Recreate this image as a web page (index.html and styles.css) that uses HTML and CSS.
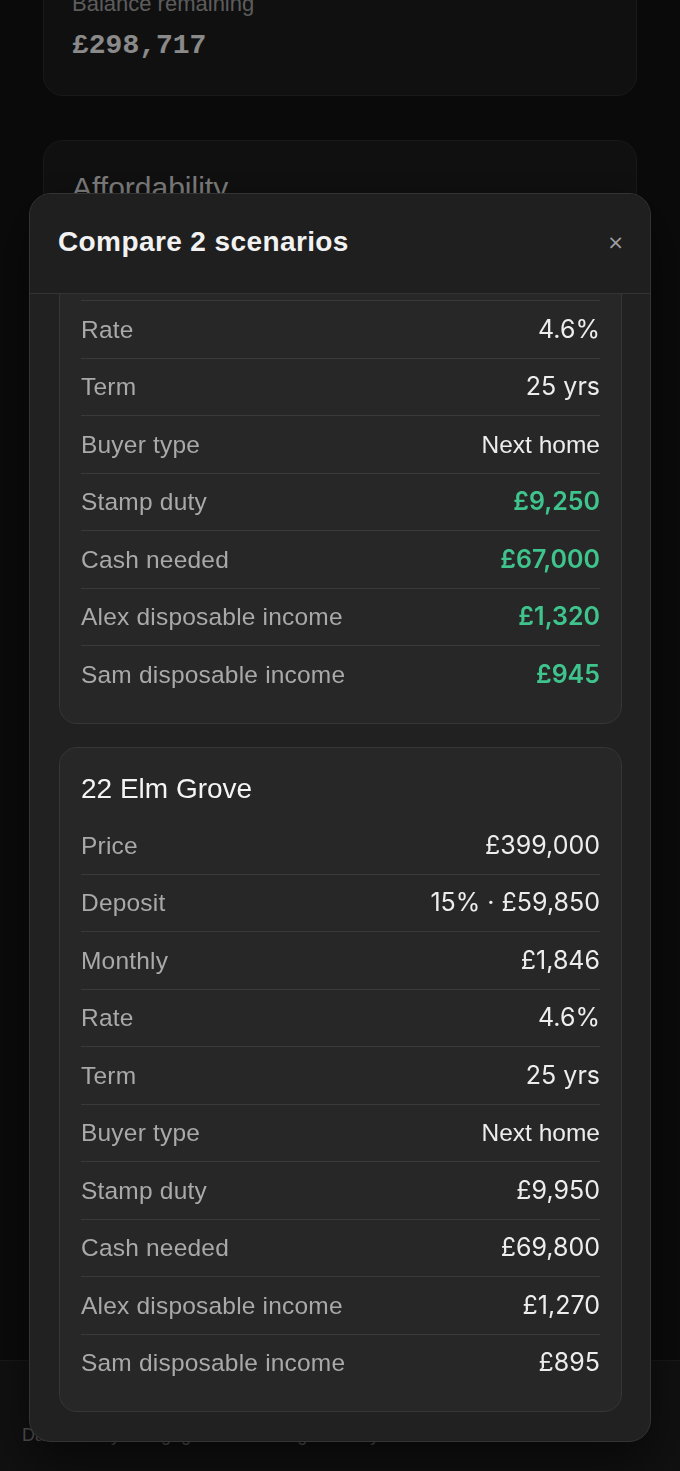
FILE: index.html
```html
<!DOCTYPE html>
<html lang="en">
<head>
<meta charset="utf-8">
<title>Compare scenarios</title>
<link rel="stylesheet" href="styles.css">
</head>
<body>
<main class="page">
  <section class="bg-card balance">
    <div class="bg-label">Balance remaining</div>
    <div class="bg-number">£298,717</div>
  </section>
  <section class="bg-card afford">
    <h2 class="bg-title">Affordability</h2>
  </section>
</main>
<footer class="foot">Data for any mortgage rates are a guide only.</footer>

<div class="backdrop"></div>

<div class="modal" role="dialog" aria-label="Compare 2 scenarios">
  <header class="modal-head">
    <h1 class="modal-title">Compare 2 scenarios</h1>
    <button class="close" aria-label="Close">×</button>
  </header>
  <div class="modal-body">
    <article class="scn">
      <h3 class="scn-title">14 Oak Lane</h3>
      <div class="row"><span class="k">Price</span><span class="v">£385,000</span></div>
      <div class="row"><span class="k">Deposit</span><span class="v">15% · £57,750</span></div>
      <div class="row"><span class="k">Monthly</span><span class="v">£1,781</span></div>
      <div class="row"><span class="k">Rate</span><span class="v">4.6%</span></div>
      <div class="row"><span class="k">Term</span><span class="v">25 yrs</span></div>
      <div class="row"><span class="k">Buyer type</span><span class="v txt">Next home</span></div>
      <div class="row"><span class="k">Stamp duty</span><span class="v best">£9,250</span></div>
      <div class="row"><span class="k">Cash needed</span><span class="v best">£67,000</span></div>
      <div class="row"><span class="k">Alex disposable income</span><span class="v best">£1,320</span></div>
      <div class="row"><span class="k">Sam disposable income</span><span class="v best">£945</span></div>
    </article>
    <article class="scn">
      <h3 class="scn-title">22 Elm Grove</h3>
      <div class="row"><span class="k">Price</span><span class="v">£399,000</span></div>
      <div class="row"><span class="k">Deposit</span><span class="v">15% · £59,850</span></div>
      <div class="row"><span class="k">Monthly</span><span class="v">£1,846</span></div>
      <div class="row"><span class="k">Rate</span><span class="v">4.6%</span></div>
      <div class="row"><span class="k">Term</span><span class="v">25 yrs</span></div>
      <div class="row"><span class="k">Buyer type</span><span class="v txt">Next home</span></div>
      <div class="row"><span class="k">Stamp duty</span><span class="v">£9,950</span></div>
      <div class="row"><span class="k">Cash needed</span><span class="v">£69,800</span></div>
      <div class="row"><span class="k">Alex disposable income</span><span class="v">£1,270</span></div>
      <div class="row"><span class="k">Sam disposable income</span><span class="v">£895</span></div>
    </article>
  </div>
</div>
</body>
</html>
```

FILE: styles.css
```css
* { box-sizing: border-box; }

html, body {
  margin: 0;
  height: 100%;
  overflow: hidden;
}

body {
  background: #121212;
  font-family: "Liberation Sans", Arial, sans-serif;
  color: #e8e8e8;
}

/* ---------- page behind the dialog ---------- */
.page {
  display: flex;
  flex-direction: column;
  gap: 44px;
  padding: 0 43px;
  margin-top: -37px;
}

.bg-card {
  background: #1b1b1b;
  border: 1px solid #2a2a2a;
  border-radius: 20px;
  padding: 29px 28px;
}

.balance { padding-bottom: 30px; }

.bg-label {
  font-size: 22px;
  line-height: 22px;
  color: #9a9a9a;
}

.bg-number {
  margin-top: 12px;
  font-family: "Liberation Mono", "DejaVu Sans Mono", monospace;
  font-weight: 700;
  font-size: 28px;
  line-height: 38px;
  color: #e6e6e6;
}

.afford { height: 1180px; }

.bg-title {
  margin: 0;
  font-size: 30px;
  line-height: 36px;
  font-weight: 400;
  color: #d0d0d0;
}

.foot {
  position: fixed;
  left: 0;
  right: 0;
  bottom: 0;
  height: 111px;
  background: #1c1c1c;
  border-top: 1px solid #2a2a2a;
  padding: 62px 22px 0;
  font-size: 18px;
  line-height: 24px;
  color: #8a8a8a;
}

.backdrop {
  position: fixed;
  inset: 0;
  background: rgba(0, 0, 0, 0.4);
}

/* ---------- dialog ---------- */
.modal {
  position: fixed;
  left: 29px;
  top: 193px;
  width: 622px;
  height: 1249px;
  background: #212121;
  border: 1px solid #343434;
  border-radius: 22px;
  display: flex;
  flex-direction: column;
  overflow: hidden;
  box-shadow: 0 20px 50px rgba(0, 0, 0, 0.55);
}

.modal-head {
  flex: 0 0 100px;
  display: flex;
  align-items: center;
  justify-content: space-between;
  padding: 0 20px 4px 28px;
  border-bottom: 1px solid #343434;
  background: #1f1f1f;
}

.modal-title {
  margin: 0;
  font-size: 28px;
  line-height: 36px;
  font-weight: 700;
  letter-spacing: 0.4px;
  color: #f2f2f2;
}

.close {
  background: none;
  border: 0;
  padding: 0 6px;
  font-family: "DejaVu Sans", sans-serif;
  font-size: 20px;
  line-height: 24px;
  color: #a0a0a0;
}

.modal-body {
  flex: 1 1 auto;
  min-height: 0;
  overflow: hidden;
  display: flex;
  flex-direction: column;
  justify-content: flex-end;
  gap: 23px;
  padding: 22px 28px 29px 29px;
}

.scn {
  flex: 0 0 auto;
  background: #272727;
  border: 1px solid #363636;
  border-radius: 18px;
  padding: 21px 21px 20px 21px;
}

.scn-title {
  margin: 0 0 8px;
  font-size: 28px;
  line-height: 40px;
  font-weight: 400;
  color: #f4f4f4;
}

.row {
  display: flex;
  justify-content: space-between;
  align-items: center;
  padding: 16.75px 0;
  border-top: 1px solid #3a3a3a;
  line-height: 23px;
}

.scn-title + .row { border-top: 0; padding-top: 17.25px; }

.k {
  font-size: 24.5px;
  letter-spacing: 0.2px;
  color: #a9a9a9;
}

.v {
  font-family: "Inter", "Liberation Sans", sans-serif;
  font-size: 25px;
  color: #ededed;
}

.v.txt {
  font-family: "Liberation Sans", Arial, sans-serif;
  font-size: 24.5px;
}

.v.best {
  font-weight: 600;
  color: #3ec48c;
}
```
